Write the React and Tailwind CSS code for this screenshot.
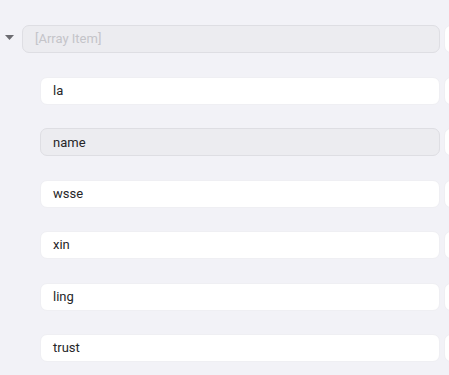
import React from "react";

const items = [
  { label: "la" },
  { label: "name", muted: true },
  { label: "wsse" },
  { label: "xin" },
  { label: "ling" },
  { label: "trust" },
];

const Field = ({ children, muted = false, placeholder = false, width }) => (
  <div
    className={`flex items-center h-[28px] shrink-0 rounded-[7px] border px-[12px] text-[13px] ${
      muted
        ? "bg-[#ececf0] border-[#dedee3]"
        : "bg-white border-[#efeff3]"
    } ${placeholder ? "text-[#c4c4c9]" : "text-[#262628]"} ${width}`}
  >
    {children}
  </div>
);

const App = () => {
  return (
    <div
      className="w-[449px] h-[375px] overflow-hidden bg-[#f2f2f7] pt-[25px]"
      style={{ fontFamily: "Roboto, 'Noto Sans', sans-serif" }}
    >
      {/* Array item header */}
      <div className="flex items-center">
        <div className="w-[22px] shrink-0 flex items-center pl-[5px] pb-[4px]">
          <svg width="9" height="5" viewBox="0 0 9 5">
            <path d="M0 0 H9 L4.5 5 Z" fill="#6c6c71" />
          </svg>
        </div>
        <Field muted placeholder width="w-[418px]">
          [Array Item]
        </Field>
        <div className="ml-[4px] h-[28px] w-[80px] shrink-0 rounded-[7px] border border-[#efeff3] bg-white" />
      </div>

      {/* Children */}
      <div className="mt-[24px] flex flex-col gap-[23.4px] pl-[40px]">
        {items.map((item) => (
          <div key={item.label} className="flex items-center">
            <Field muted={item.muted} width="w-[400px]">
              {item.label}
            </Field>
            <div className="ml-[4px] h-[28px] w-[80px] shrink-0 rounded-[7px] border border-[#efeff3] bg-white" />
          </div>
        ))}
      </div>
    </div>
  );
};

export default App;
